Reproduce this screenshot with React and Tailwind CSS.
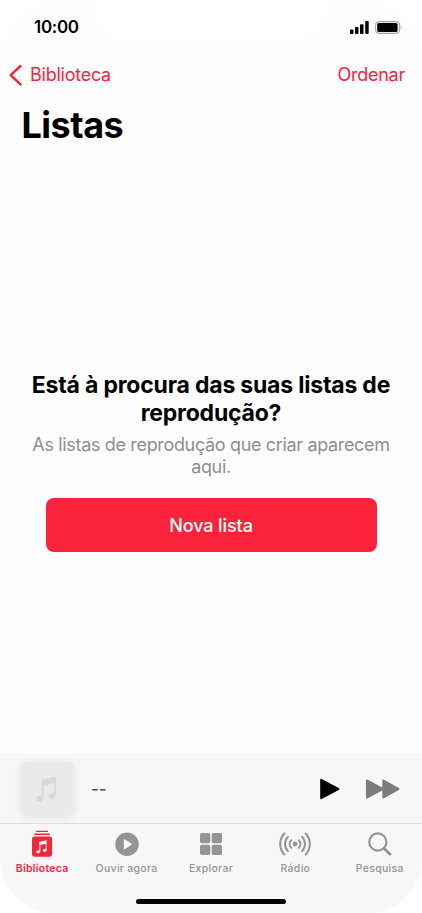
import clsx from 'clsx';

const SignalIcon = () => (
  <svg width="19" height="13" viewBox="0 0 19 13">
    <rect x="0" y="8.5" width="3.5" height="4.5" rx="1" />
    <rect x="5" y="6" width="3.5" height="7" rx="1" />
    <rect x="10" y="3.2" width="3.5" height="9.8" rx="1" />
    <rect x="15.2" y="0" width="3.5" height="13" rx="1" />
  </svg>
);

const BatteryIcon = () => (
  <svg width="28" height="13" viewBox="0 0 28 13">
    <rect x="0.6" y="0.6" width="24" height="11.8" rx="3.6" fill="none" stroke="#a3a3a3" strokeWidth="1.1" />
    <rect x="2.2" y="2" width="20.4" height="9" rx="1.6" />
    <path d="M25.8 4.6c1.2.4 1.2 3.4 0 3.8z" fill="#a3a3a3" />
  </svg>
);

const NotePath = () => (
  <path d="M6.800 3.400 18.700.5Q20 .2 20 1.500V18c0 3-1.600 4.900-4.100 4.900-2 0-3.300-1.100-3.300-2.800 0-1.600 1.100-2.700 3.100-3.200l1.400-.3c.8-.2 1.100-.6 1.100-1.300V6.900L7.700 9.300V21c0 3-1.700 4.800-4.300 4.800C1.400 25.800 0 24.700 0 23c0-1.600 1.200-2.700 3.200-3.200l1.300-.3c.9-.2 1.200-.6 1.200-1.300V4.700c0-.7.3-1.100 1.100-1.300z" />
);

const NoteIcon = ({ className }) => (
  <svg className={className} viewBox="0 0 20 26" fill="currentColor">
    <NotePath />
  </svg>
);

const LibraryIcon = () => (
  <svg width="22" height="28" viewBox="0 0 22 28">
    <path d="M5.500 1.300h11" stroke="currentColor" strokeWidth="1.200" strokeLinecap="round" />
    <path d="M3.700 4.200h14.600" stroke="currentColor" strokeWidth="1.400" strokeLinecap="round" />
    <rect x="1" y="6.500" width="20" height="20.200" rx="2.400" fill="currentColor" />
    <svg x="5" y="10.100" width="11" height="13.500" viewBox="0 0 20 26" fill="white">
      <NotePath />
    </svg>
  </svg>
);

const ListenIcon = () => (
  <svg width="24" height="24" viewBox="0 0 24 24">
    <circle cx="12" cy="12.300" r="11.700" fill="currentColor" />
    <path d="M8.800 7.700v9.200q0 .9.800.4l7-4.500q.8-.5 0-1L9.600 7.300q-.8-.5-.8.400z" fill="#f7f7f7" />
  </svg>
);

const BrowseIcon = () => (
  <svg width="22" height="22" viewBox="0 0 22 22" fill="currentColor">
    <rect x="0" y="0" width="10.300" height="10.300" rx="1.800" />
    <rect x="11.700" y="0" width="10.300" height="10.300" rx="1.800" />
    <rect x="0" y="11.700" width="10.300" height="10.300" rx="1.800" />
    <rect x="11.700" y="11.700" width="10.300" height="10.300" rx="1.800" />
  </svg>
);

const RadioIcon = () => (
  <svg width="32" height="24" viewBox="0 0 32 24" fill="none" stroke="currentColor" strokeWidth="2" strokeLinecap="round">
    <circle cx="16" cy="12" r="2.400" fill="currentColor" stroke="none" />
    <path d="M12.200 8.200a5.500 5.500 0 0 0 0 7.600M8.900 4.900a10.200 10.200 0 0 0 0 14.200M5.400 1.500a15.200 15.200 0 0 0 0 21" />
    <path d="M19.800 8.200a5.500 5.500 0 0 1 0 7.600M23.100 4.900a10.200 10.200 0 0 1 0 14.200M26.600 1.500a15.200 15.200 0 0 1 0 21" />
  </svg>
);

const SearchIcon = () => (
  <svg width="24" height="24" viewBox="0 0 24 24" fill="none" stroke="currentColor">
    <circle cx="9.800" cy="10" r="8.600" strokeWidth="2.100" />
    <path d="m16.200 16.400 5.800 5.800" strokeWidth="2.800" strokeLinecap="round" />
  </svg>
);

const TABS = [
  { label: 'Biblioteca', icon: LibraryIcon, active: true },
  { label: 'Ouvir agora', icon: ListenIcon },
  { label: 'Explorar', icon: BrowseIcon },
  { label: 'Rádio', icon: RadioIcon },
  { label: 'Pesquisa', icon: SearchIcon },
];

const App = () => (
  <div className="w-[422px] h-[913px] bg-white overflow-hidden font-['Inter',sans-serif] text-black">
    <div className="relative flex h-full flex-col overflow-hidden rounded-[54px] bg-[#fefefe]">
      {/* Notch */}
      <div className="absolute left-[99px] top-0 h-[34px] w-[224px] rounded-b-[20px] bg-white" />

      {/* Status bar */}
      <header className="relative flex h-[54px] shrink-0 items-center justify-between pl-[34px] pr-[19px]">
        <span className="text-[17px] font-semibold leading-none tracking-[-0.3px]">10:00</span>
        <div className="flex items-center gap-[6px]">
          <SignalIcon />
          <BatteryIcon />
        </div>
      </header>

      {/* Navigation */}
      <nav className="flex h-[41px] shrink-0 items-center justify-between pl-[9px] pr-[17px] text-[18px] text-[#fa233b]">
        <button className="flex items-center gap-[8px]">
          <svg width="13" height="22" viewBox="0 0 13 22" fill="none" stroke="currentColor" strokeWidth="2.500" strokeLinecap="round" strokeLinejoin="round">
            <path d="M11.500 2 1.700 11.200l9.800 9.200" />
          </svg>
          <span className="tracking-[-0.25px]">Biblioteca</span>
        </button>
        <button className="tracking-[-0.25px]">Ordenar</button>
      </nav>

      <h1 className="mt-[7px] h-[46px] shrink-0 pl-[21.5px] text-[36px] font-bold leading-[46px] tracking-[-0.5px]">Listas</h1>

      {/* Empty state */}
      <main className="flex flex-1 flex-col items-center pt-[223px] text-center">
        <h2 className="text-[23px] font-bold leading-[28px] tracking-[-0.2px]">
          Está à procura das suas listas de<br />reprodução?
        </h2>
        <p className="mt-[7px] text-[18px] leading-[22px] tracking-[-0.34px] text-[#8e8e8e]">
          As listas de reprodução que criar aparecem<br />aqui.
        </p>
        <button className="mt-[20px] h-[54px] w-[331px] rounded-[8px] bg-[#fa233b] text-[18px] font-medium tracking-[-0.1px] text-white">
          Nova lista
        </button>
      </main>

      {/* Mini player */}
      <section className="flex h-[69px] shrink-0 items-center bg-[#f7f7f7] pl-[21px] pr-[22px]">
        <div className="flex size-[53px] items-center justify-center rounded-[5px] bg-[#eaeaea] shadow-[0_2px_8px_rgba(0,0,0,0.09)]">
          <NoteIcon className="mr-[3px] h-[26px] w-[20px] text-[#d8d8d8]" />
        </div>
        <span className="ml-[17px] mt-[2px] flex-1 text-[17px] font-medium text-[#555]">--</span>
        <svg width="20" height="22" viewBox="0 0 20 22" className="mr-[26px]">
          <path d="M.2 1.800v18.400q0 1.700 1.500.9l17-9.100q1.400-1 0-2L1.700.9Q.2.100.2 1.800z" />
        </svg>
        <svg width="34" height="20" viewBox="0 0 34 20" fill="#7c7c7c">
          <path d="M0 1.800v16.400q0 1.900 1.700 1l14.600-7.800v6.800q0 1.900 1.700 1l14.900-8.100q1.400-1.100 0-2.200L18 .8q-1.700-.9-1.700 1v6.800L1.700.8Q0-.1 0 1.800z" />
        </svg>
      </section>

      {/* Tab bar */}
      <footer className="relative h-[90px] shrink-0 border-t border-[#dedede] bg-[#f7f7f7]">
        <div className="grid grid-cols-5">
          {TABS.map(({ label, icon: Icon, active }) => (
            <button key={label} className={clsx('flex flex-col items-center', active ? 'text-[#fa233b]' : 'text-[#949494]')}>
              <span className="flex h-[39px] items-center"><Icon /></span>
              <span className={clsx('whitespace-nowrap text-[10.5px] leading-[12px]', active ? 'font-semibold tracking-[0.25px]' : 'font-medium tracking-[0.3px]')}>{label}</span>
            </button>
          ))}
        </div>
        <div className="absolute bottom-[9px] left-[136px] h-[5px] w-[150px] rounded-full bg-black" />
      </footer>
    </div>
  </div>
);

export default App;
